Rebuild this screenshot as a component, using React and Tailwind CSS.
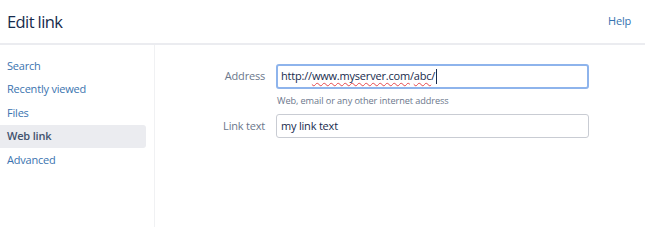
import React from 'react';

const navItems = ['Search', 'Recently viewed', 'Files', 'Web link', 'Advanced'];

export default function App() {
  return (
    <div className="w-[645px] h-[227px] bg-white overflow-hidden font-['Open_Sans',sans-serif] text-[#172b4d]">
      <div className="h-[45px] flex items-center justify-between pl-[7px] pr-[14px] border-b-2 border-[#ebecf0]">
        <h1 className="text-[16.5px] leading-none tracking-[-0.6px] text-[#172b4d] mt-[1px]">Edit link</h1>
        <span className="text-[11px] text-[#3572b0] tracking-[-0.2px] mt-[-1px]">Help</span>
      </div>
      <div className="flex h-[182px]">
        <div className="w-[155px] border-r border-[#f0f1f3] pt-[9px] pr-[8px]">
          {navItems.map(item => (
            <div
              key={item}
              className={`h-[23.5px] flex items-center pl-[7px] rounded-r-[3px] text-[11px] tracking-[-0.2px] ${
                item === 'Web link' ? 'bg-[#ebecf0] text-[#42526e] font-semibold' : 'text-[#3b73af]'
              }`}
            >
              {item}
            </div>
          ))}
        </div>
        <div className="flex-1 pt-[19px]">
          <div className="flex items-start">
            <label className="w-[121px] text-right pr-[11px] text-[11px] text-[#6b778c] leading-[24px] tracking-[-0.2px]">Address</label>
            <div>
              <div className="w-[313px] h-[25px] border-2 border-[#8eb4ec] rounded-[3px] flex items-center pl-[3px] text-[11px] text-[#172b4d] tracking-[-0.2px]">
                <span>http://<span className="underline decoration-wavy decoration-[#e5484d] decoration-1 underline-offset-2">www.myserver.com</span>/<span className="underline decoration-wavy decoration-[#e5484d] decoration-1 underline-offset-2">abc</span>/</span>
                <span className="w-px h-[15px] bg-[#172b4d] ml-[1px]"></span>
              </div>
              <div className="text-[9.2px] text-[#6b778c] mt-[5px] ml-[1px] tracking-[-0.1px]">Web, email or any other internet address</div>
            </div>
          </div>
          <div className="flex items-start mt-[6px]">
            <label className="w-[121px] text-right pr-[11px] text-[11px] text-[#6b778c] leading-[24px] tracking-[-0.2px]">Link text</label>
            <div className="w-[313px] h-[24px] border border-[#c9ccd3] rounded-[3px] flex items-center pl-[4px] text-[11px] text-[#172b4d] tracking-[-0.2px]">
              my link text
            </div>
          </div>
        </div>
      </div>
    </div>
  );
}
